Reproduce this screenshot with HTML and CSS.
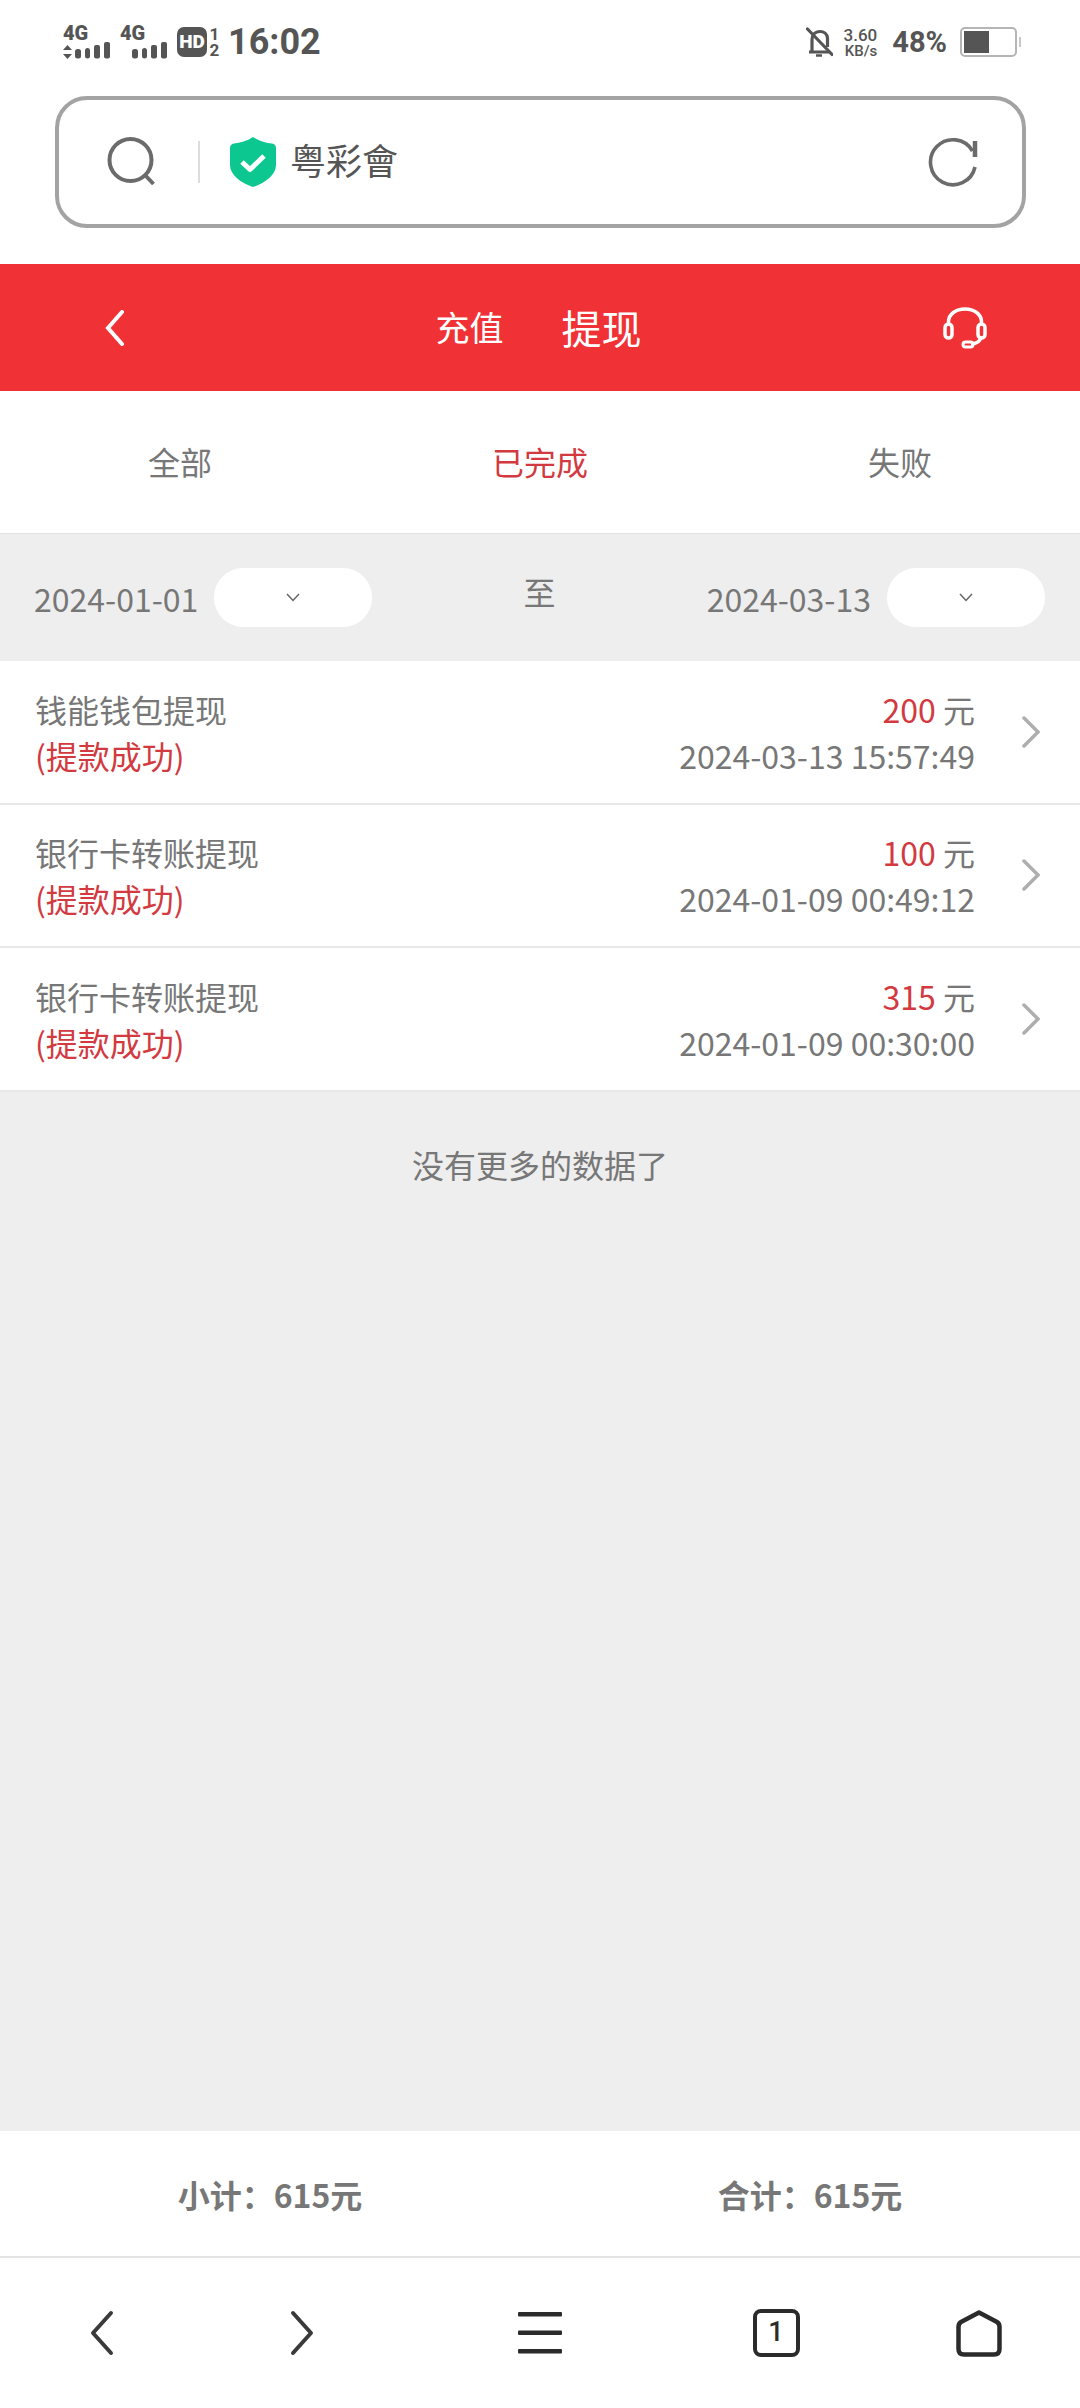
FILE: index.html
```html
<!DOCTYPE html>
<html>
<head>
  <title>提现记录</title>
  <link rel="stylesheet" href="styles.css">
</head>
<body>
<div id="page">
  <div class="status-bar">
    <div class="status-left">
      <div class="sim sim-first">
        <span class="sim-name">4G</span>
        <svg class="sim-bars" width="47" height="17" viewBox="0 0 47 17">
          <path d="M4.500 3 L9 8 H0 Z M4.500 17 L9 12 H0 Z" fill="#555"/>
          <rect x="12" y="7" width="6" height="9.500" rx="2.500" fill="#555"/>
          <rect x="22" y="6" width="5" height="10.500" rx="2.500" fill="#555"/>
          <rect x="31" y="3" width="6" height="13.500" rx="2" fill="#555"/>
          <rect x="41" y="0" width="6" height="16.500" rx="2" fill="#555"/>
        </svg>
      </div>
      <div class="sim sim-second">
        <span class="sim-name">4G</span>
        <svg class="sim-bars" width="35" height="17" viewBox="0 0 35 17">
          <rect x="0" y="7" width="6" height="9.500" rx="2.500" fill="#555"/>
          <rect x="10" y="6" width="5" height="10.500" rx="2.500" fill="#555"/>
          <rect x="19" y="3" width="6" height="13.500" rx="2" fill="#555"/>
          <rect x="29" y="0" width="6" height="16.500" rx="2" fill="#555"/>
        </svg>
      </div>
      <span class="hd-badge">HD</span>
      <span class="hd-slots"><span>1</span><span>2</span></span>
      <span class="clock">16:02</span>
    </div>
    <div class="status-right">
      <svg class="bell" width="27" height="30" viewBox="0 0 27 30" fill="none" stroke="#555" stroke-width="3.200">
        <path d="M3 25 H24 M6 25 V13 C6 8 9 4.500 14 4.500 C18 4.500 21 7 21.500 11 V20"/>
        <path d="M1.500 2 L26 27.500" stroke-linecap="round"/>
        <path d="M10 28.500 H16" stroke-width="2.500"/>
      </svg>
      <div class="speed"><span>3.60</span><span class="speed-unit">KB/s</span></div>
      <span class="percent">48%</span>
      <div class="battery"><div class="battery-level"></div></div>
      <div class="battery-tip"></div>
    </div>
  </div>

  <div class="address-wrap">
    <div class="address">
      <svg class="search-icon" width="50" height="50" viewBox="0 0 50 50" fill="none" stroke="#6b6b6b" stroke-width="4">
        <circle cx="23.500" cy="23" r="21"/>
        <path d="M38 38 L46.500 47"/>
      </svg>
      <div class="address-divider"></div>
      <svg class="shield" width="46" height="50" viewBox="0 0 46 50">
        <path d="M23 0 C29 4 36 6 42 6.500 C44.500 7 46 8.500 46 11 V28 C46 38 35 46 23 50 C11 46 0 38 0 28 V11 C0 8.500 1.500 7 4 6.500 C10 6 17 4 23 0 Z" fill="#0cc78f"/>
        <path d="M12 25 L20 32.500 L34 19" fill="none" stroke="#fff" stroke-width="5" stroke-linejoin="round"/>
      </svg>
      <span class="site-name">粤彩會</span>
      <svg class="reload-icon" width="50" height="50" viewBox="0 0 50 50" fill="none" stroke="#6b6b6b" stroke-width="3.600">
        <path d="M47 30 A22.500 22.500 0 1 1 44.500 14"/>
        <path d="M47 4 V20" stroke-width="4.500"/>
      </svg>
    </div>
  </div>

  <div class="title-bar">
    <svg class="title-back" width="22" height="36" viewBox="0 0 22 36" fill="none" stroke="#fff" stroke-width="4" stroke-linecap="round">
      <path d="M18 2 L4 18 L18 34"/>
    </svg>
    <span class="title-tab">充值</span>
    <span class="title-tab title-active">提现</span>
    <svg class="headset" width="44" height="42" viewBox="0 0 44 42" fill="none" stroke="#fff" stroke-width="3.500">
      <path d="M5.500 17 V15 C5.500 7 13 2 22 2 C31 2 38.500 7 38.500 15 V17"/>
      <rect x="2" y="17" width="7" height="14" rx="3.500"/>
      <rect x="35" y="17" width="7" height="14" rx="3.500"/>
      <path d="M37.500 31 C37 35 33 36.500 28 37"/>
      <rect x="20" y="35" width="10" height="5" rx="2.500" stroke-width="3"/>
    </svg>
  </div>

  <div class="tabs">
    <div class="tab">全部</div>
    <div class="tab tab-active">已完成</div>
    <div class="tab">失败</div>
  </div>

  <div class="date-bar">
    <div class="date-group">
      <span class="date-text">2024-01-01</span>
      <div class="date-pill">
        <svg width="14" height="9" viewBox="0 0 14 9" fill="none" stroke="#666" stroke-width="1.500"><path d="M1 1 L7 7.500 L13 1"/></svg>
      </div>
    </div>
    <span class="date-to">至</span>
    <div class="date-group">
      <span class="date-text">2024-03-13</span>
      <div class="date-pill">
        <svg width="14" height="9" viewBox="0 0 14 9" fill="none" stroke="#666" stroke-width="1.500"><path d="M1 1 L7 7.500 L13 1"/></svg>
      </div>
    </div>
  </div>

  <div class="record-list">
    <div class="record">
      <div class="record-left">
        <div>钱能钱包提现</div>
        <div class="red">(提款成功)</div>
      </div>
      <div class="record-right">
        <div><span class="red">200</span> 元</div>
        <div>2024-03-13 15:57:49</div>
      </div>
      <svg class="record-arrow" width="18" height="32" viewBox="0 0 18 32" fill="none" stroke="#aeaeae" stroke-width="3.500" stroke-linecap="round"><path d="M2 2 L16 16 L2 30"/></svg>
    </div>
    <div class="record">
      <div class="record-left">
        <div>银行卡转账提现</div>
        <div class="red">(提款成功)</div>
      </div>
      <div class="record-right">
        <div><span class="red">100</span> 元</div>
        <div>2024-01-09 00:49:12</div>
      </div>
      <svg class="record-arrow" width="18" height="32" viewBox="0 0 18 32" fill="none" stroke="#aeaeae" stroke-width="3.500" stroke-linecap="round"><path d="M2 2 L16 16 L2 30"/></svg>
    </div>
    <div class="record">
      <div class="record-left">
        <div>银行卡转账提现</div>
        <div class="red">(提款成功)</div>
      </div>
      <div class="record-right">
        <div><span class="red">315</span> 元</div>
        <div>2024-01-09 00:30:00</div>
      </div>
      <svg class="record-arrow" width="18" height="32" viewBox="0 0 18 32" fill="none" stroke="#aeaeae" stroke-width="3.500" stroke-linecap="round"><path d="M2 2 L16 16 L2 30"/></svg>
    </div>
  </div>

  <div class="list-empty">
    <p class="no-more">没有更多的数据了</p>
  </div>

  <div class="totals">
    <div class="total">小计：615元</div>
    <div class="total">合计：615元</div>
  </div>

  <div class="bottom-nav">
    <svg width="28" height="46" viewBox="0 0 28 46" fill="none" stroke="#3a3a3a" stroke-width="4" stroke-linecap="round" stroke-linejoin="round"><path d="M23 3 L5 23 L23 43"/></svg>
    <svg width="28" height="46" viewBox="0 0 28 46" fill="none" stroke="#3a3a3a" stroke-width="4" stroke-linecap="round" stroke-linejoin="round"><path d="M5 3 L23 23 L5 43"/></svg>
    <svg width="44" height="42" viewBox="0 0 44 42" fill="#2b2b2b"><rect y="0" width="44" height="4.500" rx="1"/><rect y="18.500" width="44" height="4.500" rx="1"/><rect y="37" width="44" height="4.500" rx="1"/></svg>
    <div class="tab-count">1</div>
    <svg class="nav-home" width="46" height="47" viewBox="0 0 46 47" fill="none" stroke="#2b2b2b" stroke-width="4.500" stroke-linejoin="round"><path d="M23 2.500 L41 12 Q43.500 13.500 43.500 17 V39 Q43.500 44.500 38 44.500 H8 Q2.500 44.500 2.500 39 V17 Q2.500 13.500 5 12 Z"/></svg>
  </div>
</div>
</body>
</html>
```

FILE: styles.css
```css
body {
    margin: 0;
    padding: 0;
    background-color: #ffffff;
    font-family: "Noto Sans CJK SC", "Noto Sans", sans-serif;
    color: #777777;
}

#page {
    width: 1080px;
    height: 2408px;
    display: flex;
    flex-direction: column;
    overflow: hidden;
}

/* phone status bar */
.status-bar {
    height: 84px;
    padding: 0 59px 0 63px;
    display: flex;
    justify-content: space-between;
    align-items: center;
    font-family: Roboto, sans-serif;
    color: #555555;
    box-sizing: border-box;
}

.status-left,
.status-right {
    display: flex;
    align-items: center;
}

.sim {
    display: flex;
    flex-direction: column;
    width: 57px;
}

.sim-name {
    font-size: 20px;
    font-weight: 900;
    line-height: 15px;
}

.sim-bars {
    display: block;
    margin-top: 1px;
}

.sim-second .sim-bars {
    margin-left: 12px;
}

.hd-badge {
    width: 30px;
    height: 30px;
    background-color: #555555;
    border-radius: 7px;
    color: #ffffff;
    font-size: 19px;
    font-weight: 900;
    line-height: 30px;
    text-align: center;
}

.hd-slots {
    display: flex;
    flex-direction: column;
    width: 11px;
    margin-left: 2px;
    font-size: 17px;
    font-weight: 700;
    line-height: 16px;
    text-align: center;
}

.clock {
    margin-left: 8px;
    font-size: 36px;
    font-weight: 700;
}

.bell {
    margin-right: 8px;
}

.speed {
    display: flex;
    flex-direction: column;
    align-items: flex-end;
    width: 36px;
    font-size: 17px;
    font-weight: 500;
    line-height: 17px;
}

.speed-unit {
    font-size: 15px;
    line-height: 14px;
}

.percent {
    margin-left: 15px;
    font-size: 29px;
    font-weight: 700;
}

.battery {
    width: 57px;
    height: 30px;
    margin-left: 13px;
    padding: 2px;
    border: 2px solid #b5b5b5;
    border-radius: 5px;
    box-sizing: border-box;
}

.battery-level {
    width: 25px;
    height: 100%;
    background-color: #555555;
}

.battery-tip {
    width: 2px;
    height: 10px;
    margin-left: 2px;
    background-color: #c8c8c8;
}

/* browser address bar */
.address-wrap {
    height: 180px;
    padding: 12px 54px 0 55px;
    box-sizing: border-box;
}

.address {
    height: 132px;
    padding: 0 44px 0 48px;
    border: 4px solid #a3a3a3;
    border-radius: 32px;
    display: flex;
    align-items: center;
    box-sizing: border-box;
    color: #555555;
}

.address-divider {
    width: 2px;
    height: 42px;
    margin: 0 30px 0 41px;
    background-color: #dddddd;
}

.site-name {
    flex: 1;
    margin: 0 0 6px 14px;
    font-size: 36px;
}

/* red title bar */
.title-bar {
    height: 127px;
    padding-right: 3px;
    background-color: #f03236;
    display: flex;
    align-items: center;
    color: #ffffff;
    position: relative;
    justify-content: center;
    box-sizing: border-box;
}

.title-back {
    position: absolute;
    left: 104px;
    top: 46px;
}

.headset {
    position: absolute;
    left: 943px;
    top: 43px;
}

.title-tab {
    font-size: 34px;
    margin: 0 29px 2px 29px;
}

.title-active {
    font-size: 40px;
}

/* status tabs */
.tabs {
    height: 142px;
    padding-bottom: 3px;
    display: grid;
    grid-template-columns: repeat(3, 1fr);
    align-items: center;
    text-align: center;
    font-size: 32px;
    box-sizing: border-box;
}

.tab-active {
    color: #d23a3f;
}

/* date filter */
.date-bar {
    height: 128px;
    padding: 0 35px 0 34px;
    background-color: #eeeeee;
    display: flex;
    justify-content: space-between;
    align-items: center;
    border-top: 1px solid #e4e4e4;
    box-sizing: border-box;
}

.date-group {
    display: flex;
    align-items: center;
    gap: 16px;
}

.date-text {
    font-size: 32px;
}

.date-to {
    font-size: 32px;
    margin-top: -14px;
}

.date-pill {
    width: 158px;
    height: 59px;
    background-color: #ffffff;
    border-radius: 29px;
    display: flex;
    justify-content: center;
    align-items: center;
}

/* withdrawal records */
.record-list {
    background-color: #ffffff;
}

.record {
    height: 143.5px;
    padding: 0 40px 0 35px;
    border-bottom: 2px solid #e8e8e8;
    display: flex;
    align-items: center;
    font-size: 32px;
    line-height: 46px;
    box-sizing: border-box;
}

.record-left {
    flex: 1;
}

.record-right {
    text-align: right;
}

.record-arrow {
    margin-left: 47px;
}

.red {
    color: #d23a3f;
}

.list-empty {
    flex: 1;
    background-color: #eeeeee;
}

.no-more {
    margin: 49px 0 0 0;
    font-size: 32px;
    text-align: center;
}

/* totals row */
.totals {
    height: 127px;
    border-bottom: 2px solid #e4e4e4;
    display: grid;
    grid-template-columns: 1fr 1fr;
    align-items: center;
    text-align: center;
    font-size: 32px;
    font-weight: 700;
    box-sizing: border-box;
}

/* browser bottom toolbar */
.bottom-nav {
    height: 150px;
    display: grid;
    grid-template-columns: 204px 196px 280px 192px 208px;
    justify-items: center;
    align-items: center;
}

.tab-count {
    width: 47px;
    height: 48px;
    border: 4.5px solid #2b2b2b;
    border-radius: 8px;
    box-sizing: border-box;
    font-family: Roboto, sans-serif;
    font-size: 27px;
    font-weight: 500;
    line-height: 39px;
    text-align: center;
    color: #2b2b2b;
}

.nav-home {
    margin-left: 6px;
}
```
